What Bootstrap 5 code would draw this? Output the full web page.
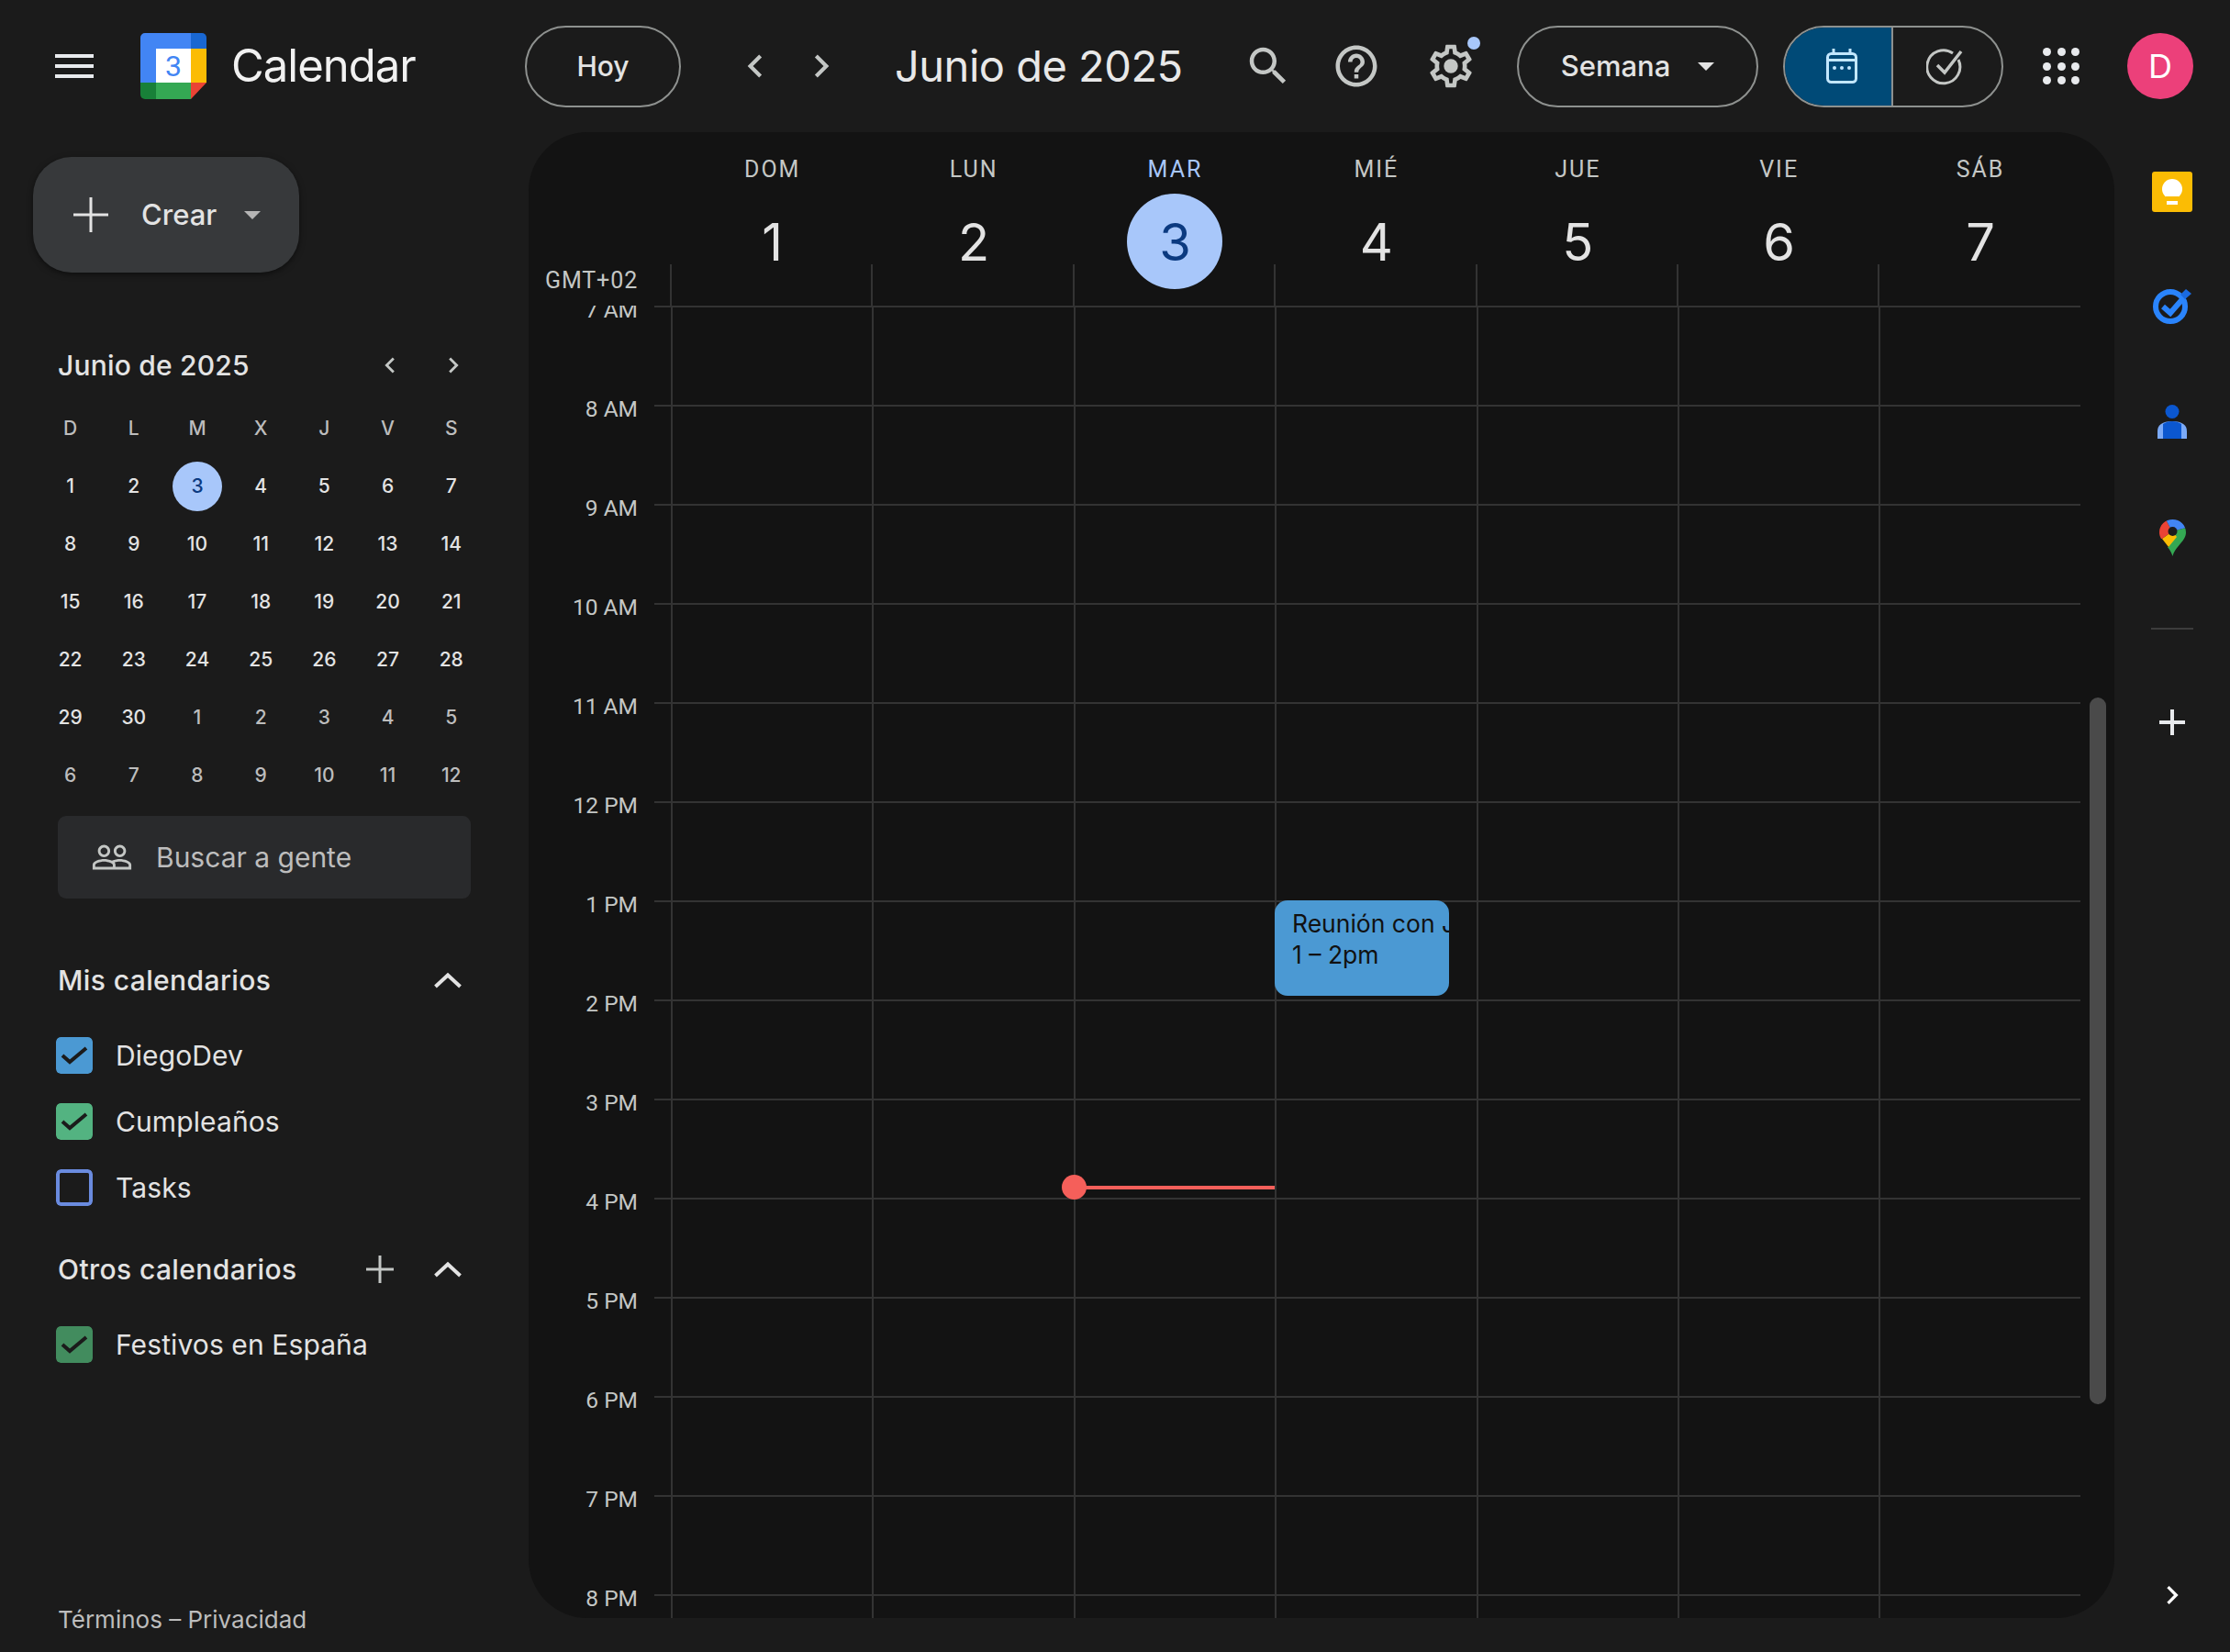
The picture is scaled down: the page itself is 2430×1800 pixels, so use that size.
<!DOCTYPE html>
<html lang="es">

<head>
    <meta charset="UTF-8">
    <title>Calendar</title>
    <link rel="stylesheet" href="https://cdn.jsdelivr.net/npm/bootstrap@5.3.0/dist/css/bootstrap.min.css">
    <style>
        html, body {
            height: 1800px;
            overflow: hidden;
        }

        body {
            background-color: #1b1b1b;
            color: #e3e3e3;
            font-family: "Inter", "Noto Sans", sans-serif;
        }

        .top-bar {
            height: 144px;
            padding-right: 40px;
        }

        .brand-zone {
            width: 572px;
            padding-left: 60px;
        }

        .brand-name {
            font-size: 49px;
            letter-spacing: -1px;
            margin-left: 27px;
            color: #f1f1f1;
        }

        .logo-mark {
            margin-left: 51px;
        }

        .pill-btn {
            height: 89px;
            border: 2px solid #8e918f;
            border-radius: 45px;
            background: transparent;
            color: #e3e3e3;
            font-size: 30px;
            font-weight: 500;
            padding: 0;
        }

        .today-btn {
            width: 170px;
        }

        .view-btn {
            width: 263px;
            margin-left: 36px;
            font-size: 31px;
        }

        .caret-down {
            width: 0;
            height: 0;
            border-left: 9px solid transparent;
            border-right: 9px solid transparent;
            border-top: 9px solid currentColor;
            margin-left: 28px;
        }

        .view-btn .caret-down {
            margin-left: 30px;
        }

        .icon-box {
            width: 72px;
            height: 72px;
            flex: none;
        }

        .title-month {
            font-size: 47px;
            letter-spacing: -.5px;
            margin-left: 44px;
            color: #e8e8e8;
        }

        .mode-toggle {
            width: 240px;
            height: 89px;
            margin-left: 27px;
            border: 2px solid #8e918f;
            border-radius: 45px;
            overflow: hidden;
        }

        .mode-toggle > div {
            width: 50%;
        }

        .mode-active {
            background: #004a77;
            border-right: 2px solid #8e918f;
        }

        .apps-dots {
            display: grid;
            grid-template-columns: repeat(3, 9px);
            gap: 6.5px;
        }

        .apps-dots i {
            width: 9px;
            height: 9px;
            border-radius: 50%;
            background: #e8eaed;
        }

        .user-avatar {
            width: 72px;
            height: 72px;
            margin-left: 36px;
            background: #ec407a;
            color: #fff;
            font-size: 36px;
        }

        .main-row {
            height: 1656px;
        }

        .side-col {
            width: 576px;
            flex: none;
        }

        .create-btn {
            width: 290px;
            height: 126px;
            margin: 27px 0 0 36px;
            border-radius: 42px;
            border: 0;
            background: #37393b;
            color: #e3e3e3;
            font-size: 31px;
            font-weight: 500;
            box-shadow: 0 2px 6px rgba(0, 0, 0, .5);
            padding: 0 0 0 44px;
        }

        .create-btn .caret-down {
            margin-left: 30px;
            color: #b5b5b5;
        }

        .create-label {
            margin-left: 36px;
        }

        .mini-head {
            margin: 81px 0 0 63px;
            width: 450px;
            height: 40px;
        }

        .mini-title {
            font-size: 30px;
            font-weight: 500;
            letter-spacing: .2px;
            color: #e3e3e3;
        }

        .mini-grid {
            margin: 17px 0 0 42px;
            display: grid;
            grid-template-columns: repeat(7, 69.2px);
            grid-auto-rows: 63px;
            width: 485px;
            font-size: 21px;
            font-weight: 500;
            text-align: center;
        }

        .mini-grid span {
            display: flex;
            align-items: center;
            justify-content: center;
        }

        .mini-grid .wd {
            color: #bdbdbd;
            font-size: 21px;
        }

        .mini-grid .off {
            color: #bdbdbd;
        }

        .mini-grid .now b {
            width: 54px;
            height: 54px;
            border-radius: 50%;
            background: #a8c7fa;
            color: #0b3a80;
            font-weight: 500;
            display: flex;
            align-items: center;
            justify-content: center;
        }

        .people-box {
            width: 450px;
            height: 90px;
            margin: 13px 0 0 63px;
            background: #292a2c;
            border-radius: 9px;
            padding-left: 36px;
            color: #bdbdbd;
            font-size: 30px;
        }

        .people-box span {
            margin-left: 25px;
        }

        .cal-head {
            height: 50px;
            margin-left: 63px;
            width: 450px;
            font-size: 30px;
            font-weight: 500;
            letter-spacing: .4px;
        }

        .cal-item {
            height: 72px;
            margin-left: 61px;
            font-size: 30px;
            letter-spacing: .1px;
        }

        .cal-box {
            width: 40px;
            height: 40px;
            border-radius: 5px;
            margin-right: 25px;
        }

        .foot-links {
            margin: auto 0 20px 63px;
            font-size: 26px;
            color: #bdbdbd;
            line-height: 30px;
        }

        .cal-panel {
            width: 1728px;
            height: 1619px;
            background: #131313;
            border-radius: 64px;
            overflow: hidden;
            position: relative;
            flex: none;
        }

        .week-head {
            height: 189px;
            padding-left: 154px;
            position: relative;
        }

        .day-head {
            width: 219.4px;
            padding-left: 4px;
            text-align: center;
            position: relative;
            flex: none;
        }

        .day-head::after {
            content: "";
            position: absolute;
            left: 0;
            bottom: 0;
            height: 45px;
            border-left: 2px solid #333;
        }

        .day-name {
            font-family: "Roboto", sans-serif;
            font-size: 25px;
            letter-spacing: 2px;
            color: #c4c7c5;
            margin-top: 24px;
            line-height: 34px;
        }

        .day-num {
            font-size: 56px;
            line-height: 106px;
            width: 104px;
            height: 104px;
            margin: 9px auto 0;
            color: #e3e3e3;
            border-radius: 50%;
            position: relative;
            z-index: 1;
        }

        .day-today .day-name {
            color: #a8c7fa;
        }

        .day-today .day-num {
            background: #a8c7fa;
            color: #0b3a80;
        }

        .tz-label {
            font-family: "Roboto", sans-serif;
            position: absolute;
            left: 18px;
            top: 148px;
            font-size: 25px;
            letter-spacing: .9px;
            line-height: 28px;
            color: #c4c7c5;
        }

        .hour-wrap {
            height: 1430px;
            overflow: hidden;
            position: relative;
        }

        .hour-row {
            height: 108px;
        }

        .hour-label {
            width: 137px;
            flex: none;
            padding-right: 18px;
            text-align: right;
            font-family: "Roboto", sans-serif;
            font-size: 24.500px;
            line-height: 28px;
            height: 28px;
            margin-top: -9px;
            color: #c4c7c5;
        }

        .hour-tick {
            width: 18px;
            flex: none;
            border-top: 2px solid #333;
        }

        .hour-cell {
            width: 219.4px;
            flex: none;
            border-top: 2px solid #333;
            border-left: 2px solid #333;
        }

        .event-chip {
            position: absolute;
            left: 813px;
            top: 837px;
            width: 190px;
            height: 104px;
            border-radius: 14px;
            background: #4b99d3;
            color: #111;
            font-size: 26.500px;
            line-height: 34px;
            padding: 8px 0 0 19px;
            white-space: nowrap;
            overflow: hidden;
        }

        .now-line {
            position: absolute;
            left: 595px;
            top: 1148px;
            width: 218px;
            height: 4px;
            background: #f55f5a;
        }

        .now-line::before {
            content: "";
            position: absolute;
            left: -14px;
            top: -12px;
            width: 27px;
            height: 27px;
            border-radius: 50%;
            background: #f55f5a;
        }

        .scroll-thumb {
            position: absolute;
            left: 1701px;
            top: 616px;
            width: 18px;
            height: 770px;
            border-radius: 9px;
            background: #4a4a4a;
        }

        .right-rail {
            width: 126px;
            flex: none;
        }

        .rail-icon {
            width: 60px;
            height: 60px;
            margin-left: 33px;
        }

        .rail-sep {
            width: 46px;
            height: 2px;
            background: #3c3c3c;
            margin: 0 0 0 40px;
        }
    </style>
</head>

<body>
    <header class="top-bar d-flex align-items-center">
        <div class="brand-zone d-flex align-items-center">
            <svg width="42" height="26" viewBox="0 0 42 26"><path fill="#e8eaed" d="M0 0h42v4H0zM0 11h42v4H0zM0 22h42v4H0z"/></svg>
            <svg class="logo-mark" width="72" height="72" viewBox="0 0 72 72">
                <path fill="#4285f4" d="M5 0h50v17H17v37H0V5a5 5 0 0 1 5-5z"/>
                <path fill="#1967d2" d="M55 0h12a5 5 0 0 1 5 5v12H55z"/>
                <rect x="17" y="17" width="38" height="37" fill="#fff"/>
                <rect x="55" y="17" width="17" height="37" fill="#fbbc04"/>
                <rect x="17" y="54" width="38" height="18" fill="#34a853"/>
                <path fill="#188038" d="M0 54h17v18H5a5 5 0 0 1-5-5z"/>
                <path fill="#ea4335" d="M55 54h17L55 72z"/>
                <text x="36" y="47" text-anchor="middle" font-family="Roboto, sans-serif" font-size="32" fill="#4285f4">3</text>
            </svg>
            <span class="brand-name">Calendar</span>
        </div>
        <button class="btn pill-btn today-btn" type="button">Hoy</button>
        <div class="icon-box d-flex align-items-center justify-content-center" style="margin-left:45px">
            <svg width="50" height="50" viewBox="0 0 24 24"><path fill="#c4c7c5" d="M15.41 7.41 14 6l-6 6 6 6 1.41-1.41L10.83 12z"/></svg>
        </div>
        <div class="icon-box d-flex align-items-center justify-content-center">
            <svg width="50" height="50" viewBox="0 0 24 24"><path fill="#c4c7c5" d="M8.59 16.59 10 18l6-6-6-6-1.41 1.41L13.17 12z"/></svg>
        </div>
        <div class="title-month">Junio de 2025</div>
        <div class="icon-box d-flex align-items-center justify-content-center ms-auto">
            <svg width="54" height="54" viewBox="0 0 24 24"><path fill="#c4c7c5" d="M15.5 14h-.79l-.28-.27C15.41 12.59 16 11.11 16 9.5 16 5.91 13.09 3 9.5 3S3 5.91 3 9.5 5.91 16 9.5 16c1.61 0 3.09-.59 4.23-1.57l.27.28v.79l5 4.99L20.49 19l-4.99-5zm-6 0C7.01 14 5 11.99 5 9.5S7.01 5 9.5 5 14 7.01 14 9.5 11.99 14 9.5 14z"/></svg>
        </div>
        <div class="icon-box d-flex align-items-center justify-content-center" style="margin-left:24px">
            <svg width="54" height="54" viewBox="0 0 24 24"><path fill="#c4c7c5" d="M11 18h2v-2h-2v2zm1-16C6.48 2 2 6.48 2 12s4.48 10 10 10 10-4.48 10-10S17.52 2 12 2zm0 18c-4.41 0-8-3.59-8-8s3.59-8 8-8 8 3.59 8 8-3.59 8-8 8zm0-14c-2.21 0-4 1.79-4 4h2c0-1.1.9-2 2-2s2 .9 2 2c0 2-3 1.75-3 5h2c0-2.25 3-2.5 3-5 0-2.21-1.79-4-4-4z"/></svg>
        </div>
        <div class="icon-box d-flex align-items-center justify-content-center position-relative" style="margin-left:31px">
            <svg width="56" height="56" viewBox="0 0 24 24"><path fill="#c4c7c5" d="M19.43 12.98c.04-.32.07-.64.07-.98 0-.34-.03-.66-.07-.98l2.11-1.65c.19-.15.24-.42.12-.64l-2-3.46c-.09-.16-.26-.25-.44-.25-.06 0-.12.01-.17.03l-2.49 1c-.52-.4-1.08-.73-1.69-.98l-.38-2.65C14.46 2.18 14.25 2 14 2h-4c-.25 0-.46.18-.49.42l-.38 2.65c-.61.25-1.17.59-1.69.98l-2.49-1c-.06-.02-.12-.03-.18-.03-.17 0-.34.09-.43.25l-2 3.46c-.13.22-.07.49.12.64l2.11 1.65c-.04.32-.07.65-.07.98 0 .33.03.66.07.98l-2.11 1.65c-.19.15-.24.42-.12.64l2 3.46c.09.16.26.25.44.25.06 0 .12-.01.17-.03l2.49-1c.52.4 1.08.73 1.69.98l.38 2.65c.03.24.24.42.49.42h4c.25 0 .46-.18.49-.42l.38-2.65c.61-.25 1.17-.59 1.69-.98l2.49 1c.06.02.12.03.18.03.17 0 .34-.09.43-.25l2-3.46c.12-.22.07-.49-.12-.64l-2.11-1.65zm-1.98-1.71c.04.31.05.52.05.73 0 .21-.02.43-.05.73l-.14 1.13.89.7 1.08.84-.7 1.21-1.27-.51-1.04-.42-.9.68c-.43.32-.84.56-1.25.73l-1.06.43-.16 1.13-.2 1.35h-1.4l-.19-1.35-.16-1.13-1.06-.43c-.43-.18-.83-.41-1.23-.71l-.91-.7-1.06.43-1.27.51-.7-1.21 1.08-.84.89-.7-.14-1.13c-.03-.31-.05-.54-.05-.74s.02-.43.05-.73l.14-1.13-.89-.7-1.08-.84.7-1.21 1.27.51 1.04.42.9-.68c.43-.32.84-.56 1.25-.73l1.06-.43.16-1.13.2-1.35h1.39l.19 1.35.16 1.13 1.06.43c.43.18.83.41 1.23.71l.91.7 1.06-.43 1.27-.51.7 1.21-1.07.85-.89.7.14 1.13z"/><circle cx="12" cy="12" r="3.300" fill="#c4c7c5"/></svg>
            <span class="position-absolute rounded-circle" style="width:14px;height:14px;background:#a8c7fa;left:54px;top:4px"></span>
        </div>
        <button class="btn pill-btn view-btn d-flex align-items-center justify-content-center" type="button">Semana<span class="caret-down"></span></button>
        <div class="mode-toggle d-flex">
            <div class="mode-active d-flex align-items-center justify-content-center">
                <svg width="34" height="38" viewBox="0 0 34 38" style="margin-left:8px"><g fill="none" stroke="#c2e7ff" stroke-width="3"><rect x="1.500" y="5.500" width="31" height="31" rx="4"/><path d="M2 12.500h30M8 0v6M26 0v6"/></g><g fill="#c2e7ff"><circle cx="9" cy="21" r="2"/><circle cx="17" cy="21" r="2"/><circle cx="25" cy="21" r="2"/></g></svg>
            </div>
            <div class="d-flex align-items-center justify-content-center">
                <svg width="44" height="44" viewBox="0 0 44 44" style="margin-right:2px"><path fill="none" stroke="#c4c7c5" stroke-width="3" d="M35 15a18 18 0 1 1-6-7"/><path fill="none" stroke="#c4c7c5" stroke-width="3.500" d="M12 21l8 8L38 6"/></svg>
            </div>
        </div>
        <div class="icon-box d-flex align-items-center justify-content-center" style="margin-left:27px">
            <div class="apps-dots"><i></i><i></i><i></i><i></i><i></i><i></i><i></i><i></i><i></i></div>
        </div>
        <div class="user-avatar rounded-circle d-flex align-items-center justify-content-center">D</div>
    </header>

    <div class="main-row d-flex">
        <aside class="side-col d-flex flex-column">
            <button class="btn create-btn d-flex align-items-center" type="button">
                <svg width="38" height="38" viewBox="0 0 38 38"><path fill="#e3e3e3" d="M17.5 0h3v17.5H38v3H20.500V38h-3V20.500H0v-3h17.5z"/></svg>
                <span class="create-label">Crear</span><span class="caret-down"></span>
            </button>

            <div class="mini-head d-flex align-items-center">
                <span class="mini-title me-auto">Junio de 2025</span>
                <svg width="34" height="34" viewBox="0 0 24 24"><path fill="#c4c7c5" d="M15.41 7.41 14 6l-6 6 6 6 1.41-1.41L10.83 12z"/></svg>
                <svg width="34" height="34" viewBox="0 0 24 24" style="margin:0 2px 0 35px"><path fill="#c4c7c5" d="M8.59 16.59 10 18l6-6-6-6-1.41 1.41L13.17 12z"/></svg>
            </div>

            <div class="mini-grid" id="miniGrid"></div>

            <div class="people-box d-flex align-items-center">
                <svg width="46" height="46" viewBox="0 0 24 24"><path fill="#c4c7c5" d="M16.5 13c-1.2 0-3.07.34-4.5 1-1.43-.67-3.3-1-4.5-1C5.33 13 1 14.08 1 16.25V19h22v-2.75c0-2.17-4.33-3.25-6.5-3.25zm-4 4.5h-10v-1.25c0-.54 2.56-1.75 5-1.75s5 1.21 5 1.75v1.25zm9 0H14v-1.25c0-.46-.2-.86-.52-1.22.88-.3 1.96-.53 3.02-.53 2.44 0 5 1.21 5 1.75v1.25zM7.5 12c1.93 0 3.5-1.57 3.5-3.5S9.43 5 7.5 5 4 6.57 4 8.5 5.57 12 7.5 12zm0-5.5c1.1 0 2 .9 2 2s-.9 2-2 2-2-.9-2-2 .9-2 2-2zm9 5.5c1.93 0 3.5-1.57 3.5-3.5S18.43 5 16.5 5 13 6.57 13 8.5s1.57 3.5 3.5 3.5zm0-5.5c1.1 0 2 .9 2 2s-.9 2-2 2-2-.9-2-2 .9-2 2-2z"/></svg>
                <span>Buscar a gente</span>
            </div>

            <div class="cal-head d-flex align-items-center" style="margin-top:64px">
                <span class="me-auto">Mis calendarios</span>
                <svg width="30" height="18" viewBox="0 0 30 18" style="margin-right:10px"><path fill="none" stroke="#e3e3e3" stroke-width="4" d="M1.500 16 15 3.500 28.500 16"/></svg>
            </div>
            <div style="margin-top:21px">
                <div class="cal-item d-flex align-items-center">
                    <svg class="cal-box" viewBox="0 0 40 40"><rect width="40" height="40" rx="5" fill="#4b99d3"/><path d="M7 20l8 7L33 12" fill="none" stroke="#1b1b1b" stroke-width="4"/></svg>DiegoDev
                </div>
                <div class="cal-item d-flex align-items-center">
                    <svg class="cal-box" viewBox="0 0 40 40"><rect width="40" height="40" rx="5" fill="#53b381"/><path d="M7 20l8 7L33 12" fill="none" stroke="#1b1b1b" stroke-width="4"/></svg>Cumpleaños
                </div>
                <div class="cal-item d-flex align-items-center">
                    <svg class="cal-box" viewBox="0 0 40 40"><rect x="2" y="2" width="36" height="36" rx="3.5" fill="none" stroke="#6a8bdf" stroke-width="4"/></svg>Tasks
                </div>
            </div>
            <div class="cal-head d-flex align-items-center" style="margin-top:28px">
                <span class="me-auto">Otros calendarios</span>
                <svg width="30" height="30" viewBox="0 0 30 30" style="margin-right:44px"><path fill="#c4c7c5" d="M13.5 0h3v13.5H30v3H16.5V30h-3V16.5H0v-3h13.5z"/></svg>
                <svg width="30" height="18" viewBox="0 0 30 18" style="margin-right:10px"><path fill="none" stroke="#e3e3e3" stroke-width="4" d="M1.500 16 15 3.500 28.500 16"/></svg>
            </div>
            <div style="margin-top:21px">
                <div class="cal-item d-flex align-items-center">
                    <svg class="cal-box" viewBox="0 0 40 40"><rect width="40" height="40" rx="5" fill="#428c5e"/><path d="M7 20l8 7L33 12" fill="none" stroke="#1b1b1b" stroke-width="4"/></svg>Festivos en España
                </div>
            </div>
            <div class="foot-links">Términos – Privacidad</div>
        </aside>

        <main class="cal-panel">
            <div class="week-head d-flex" id="weekHead">
                <div class="tz-label">GMT+02</div>
            </div>
            <div class="hour-wrap" id="hourWrap"></div>
            <div class="event-chip">Reunión con Juan<br>1 – 2pm</div>
            <div class="now-line"></div>
            <div class="scroll-thumb"></div>
        </main>

        <aside class="right-rail">
            <div class="rail-icon d-flex align-items-center justify-content-center" style="margin-top:35px">
                <svg width="44" height="44" viewBox="0 0 44 44"><rect width="44" height="44" rx="3" fill="#fbbc04"/><circle cx="22" cy="19" r="11" fill="#fff"/><rect x="15" y="27" width="14" height="5" fill="#fbbc04"/><rect x="16" y="32" width="12" height="4" fill="#fff"/></svg>
            </div>
            <div class="rail-icon d-flex align-items-center justify-content-center" style="margin-top:64px">
                <svg width="42" height="42" viewBox="0 0 42 42"><circle cx="19" cy="22" r="16" fill="none" stroke="#2a84fc" stroke-width="6"/><path d="M11 22l8 7L33 13" fill="none" stroke="#2a84fc" stroke-width="6"/><path d="M30 9l6-6 6 5-7 6z" fill="#1a6ae0"/></svg>
            </div>
            <div class="rail-icon d-flex align-items-center justify-content-center" style="margin-top:67px">
                <svg width="32" height="38" viewBox="0 0 32 38"><circle cx="16" cy="7.500" r="7.500" fill="#0b57d0"/><path d="M0 37v-8c0-7 5-11 16-11s16 4 16 11v8z" fill="#7baaf7"/><path d="M6 37V21c3-2 6-3 10-3s7 1 10 3v16z" fill="#0b57d0"/></svg>
            </div>
            <div class="rail-icon d-flex align-items-center justify-content-center" style="margin-top:66px">
                <svg width="29" height="40" viewBox="0 0 29 40">
                    <defs><clipPath id="pinShape"><path d="M14.5 0C6.500 0 0 6 0 14c0 10 11 14 14.500 26C18 28 29 24 29 14 29 6 22.500 0 14.500 0z"/></clipPath></defs>
                    <g clip-path="url(#pinShape)">
                        <path fill="#34a853" d="M14 13l15-4v31H0V30h10z"/>
                        <path fill="#fbbc04" d="M3 21l11-8 5 6-9 11z"/>
                        <path fill="#ea4335" d="M0 0h7l7 13L3 21H0z"/>
                        <path fill="#4285f4" d="M7 0h22v9l-15 4z"/>
                    </g>
                    <circle cx="14.500" cy="13" r="5" fill="#1b1b1b"/>
                </svg>
            </div>
            <div class="rail-sep" style="margin-top:68px"></div>
            <div class="rail-icon d-flex align-items-center justify-content-center" style="margin-top:71px">
                <svg width="28" height="28" viewBox="0 0 28 28"><path fill="#e8eaed" d="M12 0h4v12h12v4H16v12h-4V16H0v-4h12z"/></svg>
            </div>
            <div class="rail-icon d-flex align-items-center justify-content-center" style="margin-top:891px">
                <svg width="40" height="40" viewBox="0 0 24 24"><path fill="#fff" d="M8.59 16.59 10 18l6-6-6-6-1.41 1.41L13.17 12z"/></svg>
            </div>
        </aside>
    </div>

    <script>
        // mini calendar cells
        const miniGrid = document.getElementById('miniGrid');
        ['D', 'L', 'M', 'X', 'J', 'V', 'S'].forEach(d => {
            miniGrid.insertAdjacentHTML('beforeend', `<span class="wd">${d}</span>`);
        });
        for (let i = 0; i < 42; i++) {
            const n = i < 30 ? i + 1 : (i - 29);
            if (i === 2) miniGrid.insertAdjacentHTML('beforeend', `<span class="now"><b>${n}</b></span>`);
            else miniGrid.insertAdjacentHTML('beforeend', `<span class="${i < 30 ? '' : 'off'}">${n}</span>`);
        }

        // week header
        const weekHead = document.getElementById('weekHead');
        ['DOM', 'LUN', 'MAR', 'MIÉ', 'JUE', 'VIE', 'SÁB'].forEach((d, i) => {
            weekHead.insertAdjacentHTML('beforeend',
                `<div class="day-head ${i === 2 ? 'day-today' : ''}"><div class="day-name">${d}</div><div class="day-num">${i + 1}</div></div>`);
        });

        // hour rows
        const hourWrap = document.getElementById('hourWrap');
        ['7 AM', '8 AM', '9 AM', '10 AM', '11 AM', '12 PM', '1 PM', '2 PM', '3 PM', '4 PM', '5 PM', '6 PM', '7 PM', '8 PM'].forEach(h => {
            hourWrap.insertAdjacentHTML('beforeend',
                `<div class="hour-row d-flex"><div class="hour-label">${h}</div><div class="hour-tick"></div>${'<div class="hour-cell"></div>'.repeat(7)}</div>`);
        });
    </script>
    <script src="https://cdn.jsdelivr.net/npm/bootstrap@5.3.0/dist/js/bootstrap.bundle.min.js"></script>
</body>

</html>
